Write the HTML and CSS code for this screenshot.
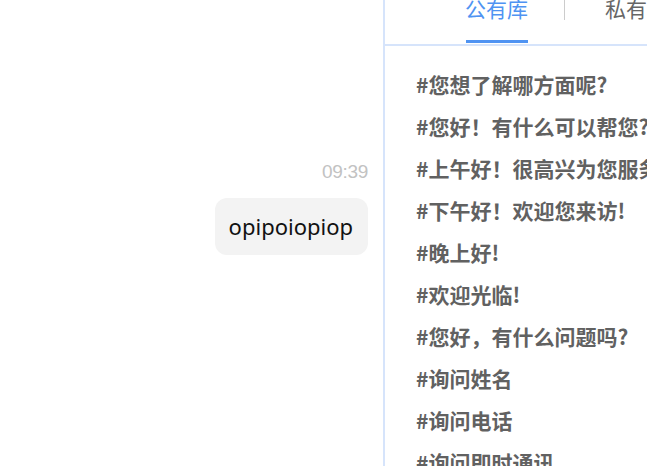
FILE: index.html
```html
<!DOCTYPE html>
<html lang="zh-CN">
<head>
<meta charset="utf-8">
<link rel="stylesheet" href="styles.css">
</head>
<body>
<div class="page">
  <div class="chat">
    <div class="time">09:39</div>
    <div class="bubble">opipoiopiop</div>
  </div>
  <div class="panel">
    <div class="tabs">
      <div class="tab active">
        <div class="tab-label">公有库</div>
        <div class="tab-bar"></div>
      </div>
      <div class="sep"></div>
      <div class="tab other">
        <div class="tab-label">私有库</div>
      </div>
    </div>
    <ul class="list">
      <li>#您想了解哪方面呢?</li>
      <li>#您好！有什么可以帮您?</li>
      <li>#上午好！很高兴为您服务!</li>
      <li>#下午好！欢迎您来访!</li>
      <li>#晚上好!</li>
      <li>#欢迎光临!</li>
      <li>#您好，有什么问题吗?</li>
      <li>#询问姓名</li>
      <li>#询问电话</li>
      <li>#询问即时通讯</li>
    </ul>
  </div>
</div>
</body>
</html>
```

FILE: styles.css
```css
html, body {
  margin: 0;
  padding: 0;
  background: #ffffff;
}
.page {
  display: flex;
  width: 647px;
  height: 466px;
  overflow: hidden;
  font-family: "Noto Sans CJK SC", "Noto Sans", sans-serif;
}
.chat {
  width: 383px;
  flex: none;
  display: flex;
  flex-direction: column;
  align-items: flex-end;
  padding-right: 15px;
  box-sizing: border-box;
}
.time {
  margin-top: 162px;
  font-family: "Liberation Sans", Arial, sans-serif;
  font-size: 19px;
  line-height: 19px;
  letter-spacing: -0.3px;
  color: #c2c2c2;
}
.bubble {
  margin-top: 17px;
  background: #f3f3f3;
  border-radius: 12px;
  padding: 15px 15px 15px 14px;
  font-family: "Noto Sans", sans-serif;
  font-size: 22px;
  line-height: 27px;
  color: #111111;
}
.panel {
  flex: 1;
  min-width: 0;
  border-left: 2px solid #d6e4fb;
  overflow: hidden;
}
.tabs {
  display: flex;
  align-items: flex-start;
  height: 44px;
  border-bottom: 2px solid #d6e4fb;
  padding-left: 81px;
  white-space: nowrap;
}
.tab {
  display: flex;
  flex-direction: column;
  flex: none;
}
.tab-label {
  margin-top: -2px;
  font-size: 21px;
  line-height: 21px;
  margin-left: -1px;
}
.active .tab-label {
  color: #4f93f2;
}
.tab-bar {
  height: 3px;
  margin-top: 21px;
  background: #4f93f2;
}
.sep {
  flex: none;
  width: 1px;
  height: 20px;
  background: #cccccc;
  margin-left: 36px;
}
.other {
  margin-left: 41px;
}
.other .tab-label {
  color: #666666;
}
.list {
  list-style: none;
  margin: 0;
  padding: 17px 0 0 31px;
  white-space: nowrap;
}
.list li {
  font-size: 21px;
  line-height: 42px;
  font-weight: bold;
  color: #616161;
}
```
